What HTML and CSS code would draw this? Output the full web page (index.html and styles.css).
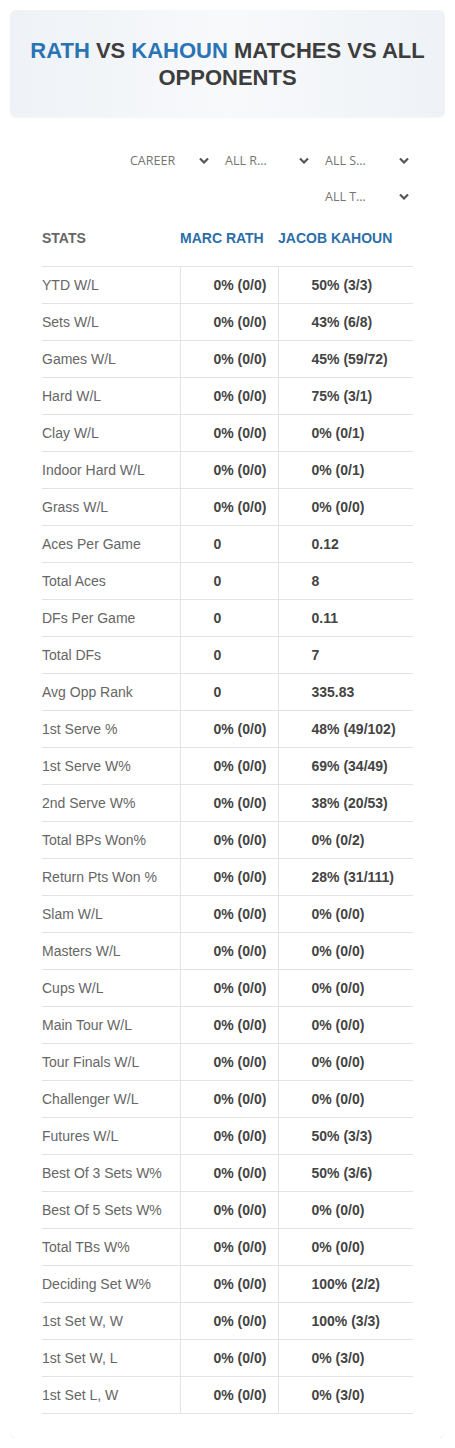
FILE: index.html
```html
<!DOCTYPE html>
<html>
<head>
  <title>Rath vs Kahoun</title>
  <link rel="stylesheet" href="styles.css">
</head>
<body>
  <div class="title-card">
    <h1><span class="blue">RATH</span> VS <span class="blue">KAHOUN</span> MATCHES VS ALL OPPONENTS</h1>
  </div>

  <div class="stats-card">
    <div class="filters">
      <div class="filter filter-first"><span>CAREER</span><svg viewBox="0 0 10 6"><path d="M1 1 L5 5 L9 1" /></svg></div>
      <div class="filter"><span>ALL R…</span><svg viewBox="0 0 10 6"><path d="M1 1 L5 5 L9 1" /></svg></div>
      <div class="filter"><span>ALL S…</span><svg viewBox="0 0 10 6"><path d="M1 1 L5 5 L9 1" /></svg></div>
      <div class="filter"><span>ALL T…</span><svg viewBox="0 0 10 6"><path d="M1 1 L5 5 L9 1" /></svg></div>
    </div>

    <table class="stats">
      <thead>
        <tr>
          <th class="label">STATS</th>
          <th class="player">MARC RATH</th>
          <th class="player">JACOB KAHOUN</th>
        </tr>
      </thead>
      <tbody>
        <tr><td>YTD W/L</td><td>0% (0/0)</td><td>50% (3/3)</td></tr>
        <tr><td>Sets W/L</td><td>0% (0/0)</td><td>43% (6/8)</td></tr>
        <tr><td>Games W/L</td><td>0% (0/0)</td><td>45% (59/72)</td></tr>
        <tr><td>Hard W/L</td><td>0% (0/0)</td><td>75% (3/1)</td></tr>
        <tr><td>Clay W/L</td><td>0% (0/0)</td><td>0% (0/1)</td></tr>
        <tr><td>Indoor Hard W/L</td><td>0% (0/0)</td><td>0% (0/1)</td></tr>
        <tr><td>Grass W/L</td><td>0% (0/0)</td><td>0% (0/0)</td></tr>
        <tr><td>Aces Per Game</td><td>0</td><td>0.12</td></tr>
        <tr><td>Total Aces</td><td>0</td><td>8</td></tr>
        <tr><td>DFs Per Game</td><td>0</td><td>0.11</td></tr>
        <tr><td>Total DFs</td><td>0</td><td>7</td></tr>
        <tr><td>Avg Opp Rank</td><td>0</td><td>335.83</td></tr>
        <tr><td>1st Serve %</td><td>0% (0/0)</td><td>48% (49/102)</td></tr>
        <tr><td>1st Serve W%</td><td>0% (0/0)</td><td>69% (34/49)</td></tr>
        <tr><td>2nd Serve W%</td><td>0% (0/0)</td><td>38% (20/53)</td></tr>
        <tr><td>Total BPs Won%</td><td>0% (0/0)</td><td>0% (0/2)</td></tr>
        <tr><td>Return Pts Won %</td><td>0% (0/0)</td><td>28% (31/111)</td></tr>
        <tr><td>Slam W/L</td><td>0% (0/0)</td><td>0% (0/0)</td></tr>
        <tr><td>Masters W/L</td><td>0% (0/0)</td><td>0% (0/0)</td></tr>
        <tr><td>Cups W/L</td><td>0% (0/0)</td><td>0% (0/0)</td></tr>
        <tr><td>Main Tour W/L</td><td>0% (0/0)</td><td>0% (0/0)</td></tr>
        <tr><td>Tour Finals W/L</td><td>0% (0/0)</td><td>0% (0/0)</td></tr>
        <tr><td>Challenger W/L</td><td>0% (0/0)</td><td>0% (0/0)</td></tr>
        <tr><td>Futures W/L</td><td>0% (0/0)</td><td>50% (3/3)</td></tr>
        <tr><td>Best Of 3 Sets W%</td><td>0% (0/0)</td><td>50% (3/6)</td></tr>
        <tr><td>Best Of 5 Sets W%</td><td>0% (0/0)</td><td>0% (0/0)</td></tr>
        <tr><td>Total TBs W%</td><td>0% (0/0)</td><td>0% (0/0)</td></tr>
        <tr><td>Deciding Set W%</td><td>0% (0/0)</td><td>100% (2/2)</td></tr>
        <tr><td>1st Set W, W</td><td>0% (0/0)</td><td>100% (3/3)</td></tr>
        <tr><td>1st Set W, L</td><td>0% (0/0)</td><td>0% (3/0)</td></tr>
        <tr><td>1st Set L, W</td><td>0% (0/0)</td><td>0% (3/0)</td></tr>
      </tbody>
    </table>
  </div>
</body>
</html>
```

FILE: styles.css
```css
body {
  margin: 10px;
  font-family: "Liberation Sans", Arial, sans-serif;
  background: #fff;
}

.title-card {
  height: 107px;
  display: flex;
  align-items: center;
  justify-content: center;
  border-radius: 6px;
  background: linear-gradient(90deg, #eef2f6 0%, #f8f9fb 50%, #eef2f6 100%);
  box-shadow: 0 1px 2px rgba(0, 0, 0, 0.04);
}

.title-card h1 {
  margin: 0;
  padding: 0 16px;
  font-size: 22px;
  line-height: 27px;
  font-weight: bold;
  text-align: center;
  color: #3d3d3d;
}

.blue { color: #2a73b5; }

.stats-card {
  margin-top: 10px;
  padding: 15px 32px 24px;
  border-radius: 8px;
  box-shadow: 0 1px 2px rgba(0, 0, 0, 0.07);
}

.filters {
  display: flex;
  flex-wrap: wrap;
  justify-content: flex-end;
}

.filter {
  width: 100px;
  height: 36px;
  box-sizing: border-box;
  padding: 0 4px 0 12px;
  display: flex;
  align-items: center;
  justify-content: space-between;
  font-family: "Open Sans", "Noto Sans", sans-serif;
  font-size: 12.5px;
  color: #757575;
}

.filter-first { padding-left: 17px; }

.filter svg {
  width: 10px;
  height: 7px;
  fill: none;
  stroke: #555;
  stroke-width: 2.2;
}

.stats {
  width: 100%;
  border-collapse: collapse;
  font-size: 14px;
}

.stats th {
  padding: 16px 0 20px;
  line-height: 16px;
  font-size: 14px;
  font-weight: bold;
  text-align: left;
  border-bottom: 1px solid #e3e3e3;
}

.stats th.label { width: 138px; color: #666; }
.stats th.player { color: #2b6ea8; }
.stats th.player:nth-child(2) { width: 98px; }

.stats td {
  height: 36px;
  padding: 0;
  border-bottom: 1px solid #e3e3e3;
  color: #666;
}

.stats td + td {
  padding-left: 33px;
  border-left: 1px solid #e3e3e3;
  font-weight: bold;
  color: #444;
}
```
